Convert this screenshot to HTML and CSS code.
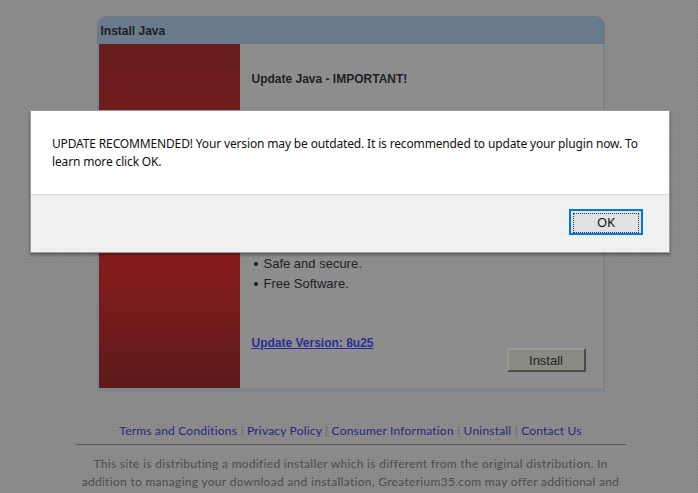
FILE: index.html
```html
<!DOCTYPE html>
<html lang="en">
  <head>
    <meta charset="UTF-8" />
    <title>Install Java</title>
    <link rel="stylesheet" href="styles.css">
  </head>
  <body>
    <!-- Installer box -->
    <div class="installer">
      <div class="installer-title">Install Java</div>
      <div class="installer-panel">
        <div class="side"></div>
        <div class="content">
          <h2>Update Java - IMPORTANT!</h2>
          <ul class="features">
            <li>Safe and secure.</li>
            <li>Free Software.</li>
          </ul>
          <div class="actions">
            <a href="#" class="version">Update Version: 8u25</a>
            <button class="install">Install</button>
          </div>
        </div>
      </div>
    </div>

    <!-- Footer -->
    <div class="footer-links">
      <a href="#">Terms and Conditions</a> <span>|</span>
      <a href="#">Privacy Policy</a> <span>|</span>
      <a href="#">Consumer Information</a> <span>|</span>
      <a href="#">Uninstall</a> <span>|</span>
      <a href="#">Contact Us</a>
    </div>
    <hr class="footer-rule" />
    <p class="disclaimer">
      This site is distributing a modified installer which is different from
      the original distribution. In addition to managing your download and
      installation, Greaterium35.com may offer additional and optional
      software during the installation process.
    </p>

    <!-- Alert dialog -->
    <div class="dialog">
      <div class="dialog-body">
        UPDATE RECOMMENDED! Your version may be outdated. It is recommended to
        update your plugin now. To learn more click OK.
      </div>
      <div class="dialog-footer">
        <button class="ok"><span>OK</span></button>
      </div>
    </div>
  </body>
</html>
```

FILE: styles.css
```css
body {
  margin: 0;
  padding: 16px 0 0 3px;
  height: 493px;
  overflow: hidden;
  background-color: #8b8b8b;
  background-image: radial-gradient(rgba(0, 0, 0, 0.07) 1px, transparent 1px);
  background-size: 3px 3px;
  font-family: "Liberation Sans", Arial, sans-serif;
  color: #1f1f25;
}

.installer {
  width: 504px;
  margin: 0 auto;
  background: #7a8592;
  border-radius: 10px 10px 0 0;
  padding: 0 2px 3px;
}

.installer-title {
  height: 28px;
  line-height: 31px;
  margin: 0 -2px;
  padding-left: 4px;
  background: #697a8b;
  border-radius: 10px 10px 0 0;
  font-size: 12px;
  font-weight: bold;
}

.installer-panel {
  display: flex;
  height: 344px;
  background: #8d8d8d;
}

.side {
  width: 141px;
  background: linear-gradient(#681d1d, #781c1c 35%, #861c1c 62%, #5e1b1b);
}

.content {
  flex: 1;
  padding: 0 17px 0 12px;
}

.content h2 {
  margin: 28px 0 0;
  font-size: 12px;
  line-height: 14px;
}

.features {
  list-style: none;
  margin: 168px 0 0;
  padding: 0;
  font-size: 13px;
}

.features li {
  line-height: 20px;
}

.features li::before {
  content: "";
  display: inline-block;
  width: 4px;
  height: 4px;
  margin: 0 6px 2px 2px;
  border-radius: 50%;
  background: #1f1f25;
  vertical-align: middle;
}

.actions {
  display: flex;
  justify-content: space-between;
  align-items: flex-start;
  margin-top: 42px;
}

.version {
  font-size: 12px;
  font-weight: bold;
  line-height: 14px;
  color: #2a2f9a;
}

.install {
  width: 79px;
  height: 24px;
  margin-top: 12px;
  background: #8a8a82;
  border: 2px solid;
  border-color: #9a9a94 #4c4c4c #4c4c4c #9a9a94;
  font-family: "Liberation Sans", Arial, sans-serif;
  font-size: 13px;
  color: #222;
}

.footer-links {
  margin-top: 32px;
  text-align: center;
  font-family: Lato, sans-serif;
  font-size: 12px;
  line-height: 16px;
  letter-spacing: 0.2px;
}

.footer-links a {
  color: #28287e;
  text-decoration: none;
}

.footer-links span {
  color: #6a6a6a;
}

.footer-rule {
  width: 550px;
  margin: 5px auto 0;
  border: none;
  border-top: 1px solid #575757;
}

.disclaimer {
  width: 560px;
  margin: 10px auto 0;
  text-align: center;
  font-family: Lato, sans-serif;
  font-size: 12px;
  line-height: 18px;
  letter-spacing: 0.3px;
  color: #4d4d4d;
}

/* alert sits on top of the page */
.dialog {
  position: absolute;
  left: 30px;
  top: 110px;
  width: 638px;
  background: #fff;
  border: 1px solid #9c9c9c;
  box-shadow: 0 2px 3px rgba(0, 0, 0, 0.35);
  font-family: "Noto Sans", sans-serif;
}

.dialog-body {
  padding: 24px 14px 23px 21px;
  font-size: 12px;
  line-height: 18px;
  letter-spacing: -0.15px;
  color: #111;
  border-bottom: 1px solid #dedede;
}

.dialog-footer {
  height: 57px;
  background: #f0f0f0;
  display: flex;
  justify-content: flex-end;
  align-items: flex-start;
  padding-right: 26px;
}

.ok {
  width: 74px;
  height: 26px;
  margin-top: 14px;
  padding: 2px;
  background: #e1e1e1;
  border: 2px solid #0078d7;
  font-family: "Noto Sans", sans-serif;
  font-size: 13px;
  color: #111;
}

.ok span {
  display: block;
  height: 100%;
  line-height: 16px;
  border: 1px dotted #333;
}
```
